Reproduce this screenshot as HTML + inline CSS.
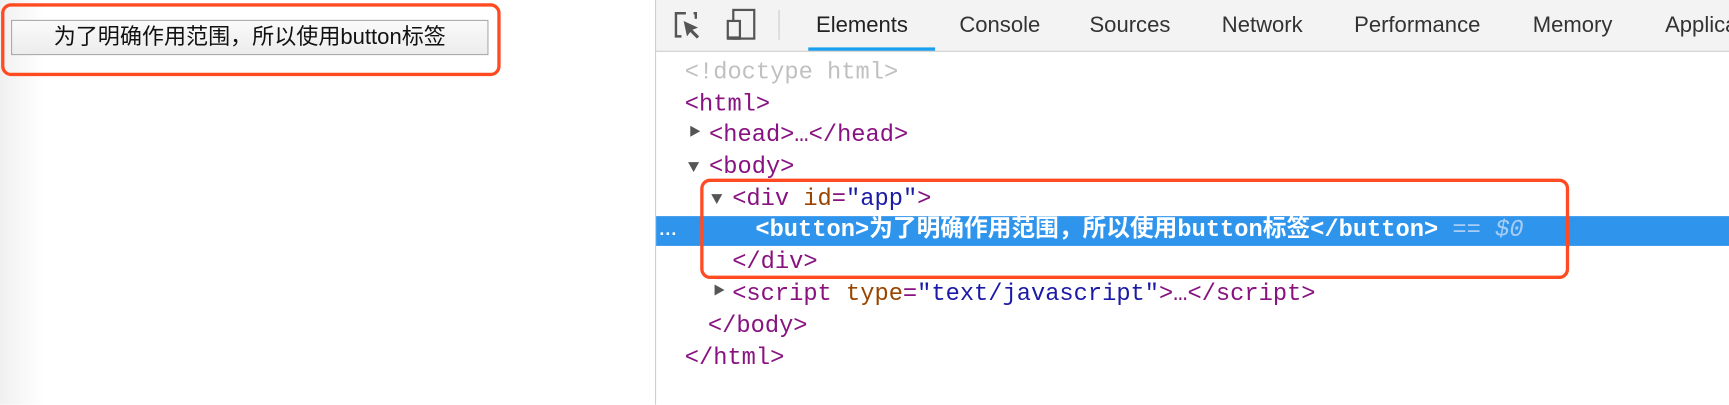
<!DOCTYPE html>
<html><head><meta charset="utf-8"><style>
html,body{margin:0;padding:0;width:1729px;height:405px;overflow:hidden;background:#fff}
#s{position:absolute;left:0;top:0;width:1568px;height:367px;transform:scale(1.1027);transform-origin:0 0;font-family:"Liberation Sans","Noto Sans CJK SC",sans-serif}
.a{position:absolute}
.shadow{left:0;top:0;width:40px;height:367px;background:linear-gradient(to right,#f0f0f0,#fff)}
.btn{left:10px;top:18px;width:431px;height:30px;border:1px solid #a9a9a9;background:linear-gradient(#fafafa,#ececec);font-size:20px;line-height:30px;text-align:center;color:#111;white-space:nowrap}
.rb{border:3px solid #ff4a22;border-radius:9px;box-sizing:border-box}
.tb{left:594px;top:0;width:974px;height:46px;background:#f3f3f3;border-bottom:1px solid #cfcfcf}
.tab{top:12px;font-size:20px;color:#333;white-space:nowrap}
.div{left:594px;top:0;width:1px;height:367px;background:#cfcfcf}
.ln{position:absolute;font-family:"Liberation Mono","Noto Sans CJK SC",monospace;font-size:21.5px;line-height:29px;white-space:pre;color:#881280}
.g{color:#c0c0c0}.n{color:#994500}.v{color:#1a1aa6}.p{color:#881280}
.tri{position:absolute;width:0;height:0}
.r{border-top:5px solid transparent;border-bottom:5px solid transparent;border-left:9px solid #555}
.d{border-left:5px solid transparent;border-right:5px solid transparent;border-top:9px solid #555}
</style></head><body><div id="s">
<div class="a shadow"></div>
<div class="a rb" style="left:1px;top:3px;width:453px;height:66px"></div>
<div class="a btn">为了明确作用范围，所以使用button标签</div>

<div class="a tb"></div>
<div class="a div"></div>
<svg class="a" style="left:608px;top:6px" width="85" height="32" viewBox="0 0 85 32">
<path d="M14 6 H5 V27 H10" fill="none" stroke="#555" stroke-width="2.2"/>
<path d="M21 6 H23 V11" fill="none" stroke="#555" stroke-width="2.2"/>
<path d="M12 13 L25 19 L20 21 L26 27 L24 29 L18 23 L15 27 Z" fill="#555"/>
<rect x="57" y="3" width="19" height="26" fill="none" stroke="#555" stroke-width="2"/>
<rect x="52" y="13" width="11" height="16" fill="#f3f3f3" stroke="#555" stroke-width="2"/>
<rect x="52" y="27" width="11" height="3" fill="#555"/>
</svg>
<div class="a" style="left:706px;top:9px;width:1px;height:27px;background:#ccc"></div>
<div class="a tab" style="left:740px;color:#222">Elements</div>
<div class="a" style="left:733px;top:43px;width:115px;height:3px;background:#1a9ef0"></div>
<div class="a tab" style="left:870px">Console</div>
<div class="a tab" style="left:988px">Sources</div>
<div class="a tab" style="left:1108px">Network</div>
<div class="a tab" style="left:1228px">Performance</div>
<div class="a tab" style="left:1390px">Memory</div>
<div class="a tab" style="left:1510px">Application</div>
<div class="a" style="left:1568px;top:0;width:10px;height:367px;background:#fff"></div>

<div class="a" style="left:595px;top:196px;width:973px;height:27px;background:#2f95ec"></div>
<div class="a" style="left:598px;top:200px;color:#fff;font-size:16px;font-weight:bold;letter-spacing:1px">...</div>

<div class="ln g" style="left:621px;top:52px">&lt;!doctype html&gt;</div>
<div class="ln" style="left:621px;top:81px">&lt;html&gt;</div>
<div class="tri r" style="left:626px;top:114px"></div>
<div class="ln" style="left:643px;top:109px">&lt;head&gt;…&lt;/head&gt;</div>
<div class="tri d" style="left:624px;top:147px"></div>
<div class="ln" style="left:643px;top:138px">&lt;body&gt;</div>
<div class="tri d" style="left:645px;top:176px"></div>
<div class="ln" style="left:664px;top:167px">&lt;div <span class="n">id</span>=<span class="v">"app"</span>&gt;</div>
<div class="ln" style="left:685px;top:195px;color:#fff;font-weight:bold">&lt;button&gt;为了明确作用范围，所以使用button标签&lt;/button&gt; <span style="color:#a9cdf5;font-weight:normal">== <i>$0</i></span></div>
<div class="ln" style="left:664px;top:224px">&lt;/div&gt;</div>
<div class="tri r" style="left:648px;top:258px"></div>
<div class="ln" style="left:664px;top:253px">&lt;script <span class="n">type</span>=<span class="v">"text/javascript"</span>&gt;…&lt;/script&gt;</div>
<div class="ln" style="left:642px;top:282px">&lt;/body&gt;</div>
<div class="ln" style="left:621px;top:311px">&lt;/html&gt;</div>

<div class="a rb" style="left:635px;top:162px;width:788px;height:91px"></div>
</div></body></html>
